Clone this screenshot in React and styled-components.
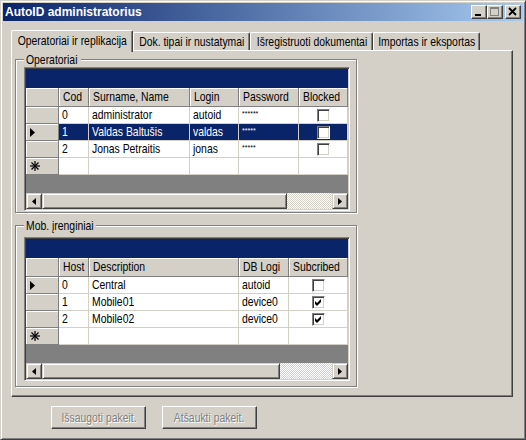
import React from "react";
import styled, { createGlobalStyle } from "styled-components";

const FONT = `"Liberation Sans", Arial, sans-serif`;

const Global = createGlobalStyle`
  html, body { margin: 0; padding: 0; background: #d4d0c8; }
  body { width: 526px; height: 440px; overflow: hidden; font-family: ${FONT}; font-size: 13px; color: #000; }
  * { box-sizing: border-box; }
`;

/* The reference uses a condensed UI face; none is installed, so text is narrowed. */
const Narrow = styled.span`
  display: inline-block;
  white-space: nowrap;
  transform: scaleX(0.8);
  transform-origin: ${(p) => p.$origin || "left"} center;
`;

const Window = styled.div`
  width: 526px;
  height: 440px;
  display: flex;
  flex-direction: column;
  background: #d4d0c8;
  border: 1px solid;
  border-color: #d4d0c8 #404040 #404040 #d4d0c8;
  box-shadow: inset 1px 1px 0 #fff, inset -1px -1px 0 #808080;
  padding: 2px;
`;

const TitleBar = styled.div`
  height: 18px;
  flex: none;
  display: flex;
  align-items: center;
  justify-content: space-between;
  background: linear-gradient(to right, #0a246a, #a6caf0);
  padding: 0 2px 0 2px;
`;

const Title = styled.span`
  font-family: "Liberation Sans", Arial, sans-serif;
  font-weight: bold;
  font-size: 12px;
  color: #fff;
  line-height: 18px;
`;

const CaptionButtons = styled.div`
  display: flex;
  align-items: center;
`;

const CaptionButton = styled.div`
  width: 16px;
  height: 14px;
  background: #d4d0c8;
  border: 1px solid;
  border-color: #fff #404040 #404040 #fff;
  box-shadow: inset -1px -1px 0 #808080;
  margin-left: ${(p) => (p.$gap ? 2 : 0)}px;
  svg { display: block; }
`;

const Body = styled.div`
  flex: 1;
  display: flex;
  flex-direction: column;
  padding: 9px 10px 0 8px;
`;

const TabStrip = styled.div`
  display: flex;
  align-items: flex-end;
  height: 20px;
`;

const Tab = styled.div`
  width: ${(p) => p.$w}px;
  height: ${(p) => (p.$active ? 22 : 18)}px;
  margin-bottom: ${(p) => (p.$active ? -2 : 0)}px;
  position: relative;
  z-index: ${(p) => (p.$active ? 2 : 1)};
  background: #d4d0c8;
  border-top: 1px solid #fff;
  border-left: 1px solid #fff;
  border-right: 1px solid #404040;
  border-radius: 2px 2px 0 0;
  box-shadow: inset -1px 0 0 #808080;
  display: flex;
  justify-content: center;
  padding-top: ${(p) => (p.$active ? 2 : 1)}px;
  line-height: 15px;
  white-space: nowrap;
`;

const TabPanel = styled.div`
  height: 347px;
  display: flex;
  flex-direction: column;
  border: 1px solid;
  border-color: #fff #404040 #404040 #fff;
  box-shadow: inset -1px -1px 0 #808080;
  padding: 8px 3px 0 3px;
`;

const GroupBox = styled.div`
  width: 342px;
  display: flex;
  flex-direction: column;
  margin-top: ${(p) => p.$mt}px;
  border: 1px solid #808080;
  box-shadow: inset 1px 1px 0 #fff, 1px 1px 0 #fff;
  padding: 0 6px ${(p) => p.$pb}px 8px;
`;

const Legend = styled.div`
  align-self: flex-start;
  width: ${(p) => p.$w}px;
  margin: -7px 0 0 0;
  padding: 0 2px;
  background: #d4d0c8;
  line-height: 13px;
  height: 13px;
  white-space: nowrap;
`;

const GridFrame = styled.div`
  width: 326px;
  margin-top: ${(p) => p.$mt}px;
  display: flex;
  flex-direction: column;
  border: 1px solid;
  border-color: #808080 #fff #fff #808080;
  box-shadow: inset 1px 1px 0 #404040, inset -1px -1px 0 #d4d0c8;
  padding: 1px;
  background: #808080;
`;

const Caption = styled.div`
  height: 19px;
  background: #0a246a;
`;

const Row = styled.div`
  display: grid;
  grid-template-columns: ${(p) => p.$cols};
  height: ${(p) => p.$h}px;
`;

const HeaderCell = styled.div`
  background: #d4d0c8;
  border-right: 1px solid #808080;
  border-bottom: 1px solid #808080;
  box-shadow: inset 1px 1px 0 #fff;
  padding-left: 4px;
  line-height: 18px;
  white-space: nowrap;
  overflow: hidden;
`;

const RowHeader = styled.div`
  background: #d4d0c8;
  border-right: 1px solid #808080;
  border-bottom: 1px solid #808080;
  box-shadow: inset 1px 1px 0 #fff;
  display: flex;
  align-items: center;
  padding-left: 4px;
  svg { display: block; }
`;

const Cell = styled.div`
  background: ${(p) => (p.$sel ? "#0a246a" : "#fff")};
  color: ${(p) => (p.$sel ? "#fff" : "#000")};
  border-right: 1px solid #d4d0c8;
  border-bottom: 1px solid #d4d0c8;
  padding-left: 3px;
  line-height: 16px;
  white-space: nowrap;
  overflow: hidden;
  display: flex;
  align-items: ${(p) => (p.$top ? "flex-start" : "center")};
  justify-content: ${(p) => (p.$center ? "center" : "flex-start")};
  padding-right: ${(p) => (p.$center ? 3 : 0)}px;
`;

const Stars = styled.span`
  font-family: "Liberation Sans", Arial, sans-serif;
  font-size: 7px;
  line-height: 10px;
  margin-top: 2px;
`;

const CheckBox = styled.div`
  width: 13px;
  height: 13px;
  background: #fff;
  border: 1px solid;
  border-color: #808080 #fff #fff #808080;
  box-shadow: inset 1px 1px 0 #404040, inset -1px -1px 0 #d4d0c8;
  padding: 2px;
  svg { display: block; }
`;

const EmptyArea = styled.div`
  height: 18px;
  background: #808080;
`;

const ScrollBar = styled.div`
  height: 16px;
  display: flex;
`;

const ScrollButton = styled.div`
  width: ${(p) => p.$w}px;
  flex: none;
  background: #d4d0c8;
  border: 1px solid;
  border-color: #d4d0c8 #404040 #404040 #d4d0c8;
  box-shadow: inset 1px 1px 0 #fff, inset -1px -1px 0 #808080;
  display: flex;
  align-items: center;
  justify-content: center;
  svg { display: block; }
`;

const Track = styled.div`
  flex: 1;
  background: repeating-conic-gradient(#fff 0 25%, #d4d0c8 0 50%) 0 0 / 2px 2px;
`;

const ButtonRow = styled.div`
  display: flex;
  gap: 16px;
  margin-top: 9px;
  padding-left: 40px;
`;

const PushButton = styled.div`
  width: 95px;
  height: 23px;
  background: #d4d0c8;
  border: 1px solid;
  border-color: #fff #404040 #404040 #fff;
  box-shadow: inset -1px -1px 0 #808080;
  display: flex;
  align-items: center;
  justify-content: center;
  color: #808080;
  text-shadow: 1px 1px 0 #fff;
  line-height: 20px;
  white-space: nowrap;
`;

const Triangle = ({ dir = "right", color = "#000", w = 5, h = 9 }) => (
  <svg width={w} height={h} viewBox={`0 0 ${w} ${h}`}>
    {dir === "right" ? (
      <polygon points={`0,0 ${w},${h / 2} 0,${h}`} fill={color} />
    ) : (
      <polygon points={`${w},0 0,${h / 2} ${w},${h}`} fill={color} />
    )}
  </svg>
);

const Asterisk = () => (
  <svg width="10" height="10" viewBox="0 0 10 10">
    <g stroke="#000" strokeWidth="1.2">
      <line x1="5" y1="0" x2="5" y2="10" />
      <line x1="0" y1="5" x2="10" y2="5" />
      <line x1="1.5" y1="1.5" x2="8.5" y2="8.5" />
      <line x1="8.5" y1="1.5" x2="1.5" y2="8.5" />
    </g>
  </svg>
);

const Check = () => (
  <svg width="7" height="7" viewBox="0 0 7 7">
    <polygon points="0,2 2,4 6,0 6,3 2,7 0,5" fill="#000" />
  </svg>
);

function DataGrid({ cols, headers, types, rows, current, selected, thumb, mt }) {
  const template = cols.map((c) => `${c}px`).join(" ");
  const renderCell = (v, t) => {
    if (t === "check") return <CheckBox>{v ? <Check /> : null}</CheckBox>;
    if (t === "pwd") return <Stars>{v}</Stars>;
    return <Narrow>{v}</Narrow>;
  };
  return (
    <GridFrame $mt={mt}>
      <Caption />
      <Row $cols={template} $h={19}>
        <HeaderCell />
        {headers.map((h) => (
          <HeaderCell key={h}>
            <Narrow>{h}</Narrow>
          </HeaderCell>
        ))}
      </Row>
      {rows.map((r, i) => (
        <Row $cols={template} $h={17} key={i}>
          <RowHeader>{i === current ? <Triangle /> : null}</RowHeader>
          {r.map((v, j) => (
            <Cell
              key={j}
              $sel={i === selected}
              $center={types[j] === "check"}
              $top={types[j] === "pwd"}
            >
              {renderCell(v, types[j])}
            </Cell>
          ))}
        </Row>
      ))}
      <Row $cols={template} $h={17}>
        <RowHeader>
          <Asterisk />
        </RowHeader>
        {headers.map((h) => (
          <Cell key={h} />
        ))}
      </Row>
      <EmptyArea />
      <ScrollBar>
        <ScrollButton $w={16}>
          <Triangle dir="left" w={4} h={7} />
        </ScrollButton>
        <ScrollButton $w={thumb} />
        <Track />
        <ScrollButton $w={16}>
          <Triangle dir="right" w={4} h={7} />
        </ScrollButton>
      </ScrollBar>
    </GridFrame>
  );
}

const operators = [
  ["0", "administrator", "autoid", "******", false],
  ["1", "Valdas Baltušis", "valdas", "*****", false],
  ["2", "Jonas Petraitis", "jonas", "*****", false],
];

const devices = [
  ["0", "Central", "autoid", false],
  ["1", "Mobile01", "device0", true],
  ["2", "Mobile02", "device0", true],
];

export default function App() {
  return (
    <>
      <Global />
      <Window>
        <TitleBar>
          <Title>AutoID administratorius</Title>
          <CaptionButtons>
            <CaptionButton>
              <svg width="14" height="12" viewBox="0 0 14 12">
                <rect x="3" y="8" width="6" height="2" fill="#000" />
              </svg>
            </CaptionButton>
            <CaptionButton>
              <svg width="14" height="12" viewBox="0 0 14 12">
                <rect x="2.5" y="1.5" width="8" height="8" fill="none" stroke="#808080" strokeWidth="1" />
                <rect x="2" y="1" width="9" height="2" fill="#808080" />
              </svg>
            </CaptionButton>
            <CaptionButton $gap>
              <svg width="14" height="12" viewBox="0 0 14 12">
                <path d="M3 2 L10 9 M10 2 L3 9" stroke="#000" strokeWidth="1.8" />
              </svg>
            </CaptionButton>
          </CaptionButtons>
        </TitleBar>
        <Body>
          <TabStrip>
            <Tab $w={122} $active>
              <Narrow $origin="center">Operatoriai ir replikacija</Narrow>
            </Tab>
            <Tab $w={117}>
              <Narrow $origin="center">Dok. tipai ir nustatymai</Narrow>
            </Tab>
            <Tab $w={123}>
              <Narrow $origin="center">Išregistruoti dokumentai</Narrow>
            </Tab>
            <Tab $w={107}>
              <Narrow $origin="center">Importas ir eksportas</Narrow>
            </Tab>
          </TabStrip>
          <TabPanel>
            <GroupBox $mt={0} $pb={1}>
              <Legend $w={57}>
                <Narrow>Operatoriai</Narrow>
              </Legend>
              <DataGrid
                mt={1}
                cols={[33, 30, 101, 49, 60, 49]}
                headers={["Cod", "Surname, Name", "Login", "Password", "Blocked"]}
                types={["text", "text", "text", "pwd", "check"]}
                rows={operators}
                current={1}
                selected={1}
                thumb={245}
              />
            </GroupBox>
            <GroupBox $mt={12} $pb={5}>
              <Legend $w={72}>
                <Narrow>Mob. įrenginiai</Narrow>
              </Legend>
              <DataGrid
                mt={5}
                cols={[33, 30, 150, 50, 59]}
                headers={["Host", "Description", "DB Logi", "Subcribed"]}
                types={["text", "text", "text", "check"]}
                rows={devices}
                current={0}
                selected={-1}
                thumb={238}
              />
            </GroupBox>
          </TabPanel>
          <ButtonRow>
            <PushButton>
              <Narrow $origin="center">Išsaugoti pakeit.</Narrow>
            </PushButton>
            <PushButton>
              <Narrow $origin="center">Atšaukti pakeit.</Narrow>
            </PushButton>
          </ButtonRow>
        </Body>
      </Window>
    </>
  );
}
